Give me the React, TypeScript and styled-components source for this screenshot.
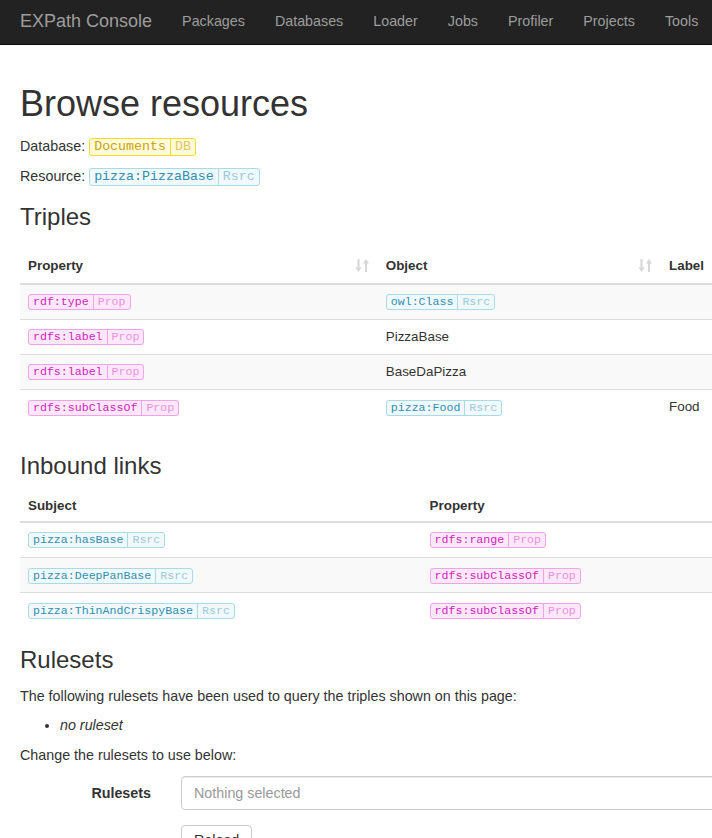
import React from "react";
import styled, { createGlobalStyle } from "styled-components";

const Global = createGlobalStyle`
  html, body { margin: 0; padding: 0; background: #fff; overflow-x: hidden; }
  body { font-family: "Liberation Sans", Arial, sans-serif; font-size: 14.3px; line-height: 20px; color: #333; }
  * { box-sizing: border-box; }
`;

const Navbar = styled.nav`
  height: 45px;
  background: #222;
  border-bottom: 1px solid #080808;
  display: flex;
  align-items: center;
  padding: 0 0 2px 20px;
  white-space: nowrap;
`;
const Brand = styled.a`
  font-size: 18px;
  color: #9d9d9d;
  margin-right: 15px;
`;
const NavLink = styled.a`
  font-size: 14.3px;
  color: #9d9d9d;
  padding: 0 15px;
`;

const Container = styled.div`
  width: 820px;
  padding: 0 20px;
`;

const H1 = styled.h1`
  font-size: 36px;
  font-weight: 500;
  line-height: 1.1;
  margin: 39px 0 12px;
`;
const H3 = styled.h3`
  font-size: 24px;
  font-weight: 500;
  line-height: 1.1;
  margin: 18px 0 12px;
`;
const P = styled.p<{ $mb?: number }>`
  margin: 0 0 ${(p) => p.$mb ?? 10}px;
`;

type Kind = "db" | "rsrc" | "prop";
const palette: Record<Kind, { fg: string; light: string; bg: string; border: string }> = {
  db: { fg: "#c8a400", light: "#e0c860", bg: "#fffbdc", border: "#f5dc20" },
  rsrc: { fg: "#2f8fb0", light: "#9ccad8", bg: "#f1f9fc", border: "#a6dbe8" },
  prop: { fg: "#d21cc0", light: "#ea90e0", bg: "#fde8f9", border: "#f2a2ea" },
};

const Tag = styled.span<{ $kind: Kind; $size: number }>`
  display: inline-flex;
  align-items: stretch;
  font-family: "Liberation Mono", "Courier New", monospace;
  font-size: ${(p) => p.$size}px;
  line-height: 1.2;
  border: 1px solid ${(p) => palette[p.$kind].border};
  background: ${(p) => palette[p.$kind].bg};
  border-radius: 3px;
  vertical-align: middle;
`;
const TagMain = styled.span<{ $kind: Kind }>`
  color: ${(p) => palette[p.$kind].fg};
  padding: 0 4px;
`;
const TagType = styled.span<{ $kind: Kind }>`
  color: ${(p) => palette[p.$kind].light};
  padding: 0 4px;
  border-left: 1px solid ${(p) => palette[p.$kind].border};
`;

function Pill({ kind, name, type, size = 11.6 }: { kind: Kind; name: string; type: string; size?: number }) {
  return (
    <Tag $kind={kind} $size={size}>
      <TagMain $kind={kind}>{name}</TagMain>
      <TagType $kind={kind}>{type}</TagType>
    </Tag>
  );
}

const Table = styled.table<{ $mb: number; $rowH: number }>`
  border-collapse: collapse;
  font-size: 13.4px;
  line-height: 1.428571;
  margin-bottom: ${(p) => p.$mb}px;
  td { height: ${(p) => p.$rowH}px; }
`;
const Th = styled.th<{ $w?: number; $pt: number; $pb: number }>`
  text-align: left;
  font-weight: bold;
  padding: ${(p) => p.$pt}px 8px ${(p) => p.$pb}px;
  border-bottom: 2px solid #ddd;
  width: ${(p) => (p.$w ? `${p.$w}px` : "auto")};
`;
const ThInner = styled.div`
  display: flex;
  justify-content: space-between;
  align-items: center;
`;
const Tr = styled.tr<{ $striped?: boolean }>`
  background: ${(p) => (p.$striped ? "#f9f9f9" : "#fff")};
`;
const Td = styled.td`
  padding: 7px 8px 8px;
  border-top: 1px solid #ddd;
  vertical-align: middle;
`;

function SortIcon() {
  return (
    <svg width="15" height="15" viewBox="0 0 15 15" fill="#d6d6d6">
      <rect x="2.5" y="1" width="2" height="10" />
      <path d="M0.5 9.5 L6.5 9.5 L3.5 14 Z" />
      <rect x="10" y="4" width="2" height="10" />
      <path d="M8 5.5 L14 5.5 L11 1 Z" />
    </svg>
  );
}

const List = styled.ul`
  margin: 0 0 10px;
  padding-left: 40px;
  font-style: italic;
`;

const FormRow = styled.div`
  display: flex;
  align-items: center;
  margin-top: 11px;
`;
const Label = styled.label`
  width: 161px;
  text-align: right;
  padding-right: 30px;
  font-weight: bold;
`;
const Select = styled.div`
  flex: 1;
  height: 34px;
  border: 1px solid #ccc;
  border-radius: 4px;
  padding: 6px 12px;
  color: #999;
  box-shadow: inset 0 1px 1px rgba(0,0,0,0.075);
`;
const ButtonRow = styled.div`
  padding-left: 161px;
  margin-top: 15px;
`;
const Button = styled.button`
  font-family: inherit;
  font-size: 14.3px;
  padding: 6px 12px;
  border: 1px solid #ccc;
  border-radius: 4px;
  background: #fff;
  color: #333;
`;

export default function App() {
  return (
    <>
      <Global />
      <Navbar>
        <Brand>EXPath Console</Brand>
        {["Packages", "Databases", "Loader", "Jobs", "Profiler", "Projects", "Tools"].map((n) => (
          <NavLink key={n}>{n}</NavLink>
        ))}
      </Navbar>
      <Container>
        <H1>Browse resources</H1>
        <P>
          Database: <Pill kind="db" name="Documents" type="DB" size={13.3} />
        </P>
        <P>
          Resource: <Pill kind="rsrc" name="pizza:PizzaBase" type="Rsrc" size={13.3} />
        </P>
        <H3>Triples</H3>
        <Table $mb={29} $rowH={35}>
          <thead>
            <tr>
              <Th $w={360} $pt={14} $pb={7}>
                <ThInner>
                  Property <SortIcon />
                </ThInner>
              </Th>
              <Th $w={285} $pt={14} $pb={7}>
                <ThInner>
                  Object <SortIcon />
                </ThInner>
              </Th>
              <Th $w={140} $pt={14} $pb={7}>Label</Th>
            </tr>
          </thead>
          <tbody>
            <Tr $striped>
              <Td><Pill kind="prop" name="rdf:type" type="Prop" /></Td>
              <Td><Pill kind="rsrc" name="owl:Class" type="Rsrc" /></Td>
              <Td></Td>
            </Tr>
            <Tr>
              <Td><Pill kind="prop" name="rdfs:label" type="Prop" /></Td>
              <Td>PizzaBase</Td>
              <Td></Td>
            </Tr>
            <Tr $striped>
              <Td><Pill kind="prop" name="rdfs:label" type="Prop" /></Td>
              <Td>BaseDaPizza</Td>
              <Td></Td>
            </Tr>
            <Tr>
              <Td><Pill kind="prop" name="rdfs:subClassOf" type="Prop" /></Td>
              <Td><Pill kind="rsrc" name="pizza:Food" type="Rsrc" /></Td>
              <Td>Food</Td>
            </Tr>
          </tbody>
        </Table>
        <H3>Inbound links</H3>
        <Table $mb={20} $rowH={34}>
          <thead>
            <tr>
              <Th $w={403} $pt={4} $pb={6}>Subject</Th>
              <Th $w={380} $pt={4} $pb={6}>Property</Th>
            </tr>
          </thead>
          <tbody>
            <Tr>
              <Td><Pill kind="rsrc" name="pizza:hasBase" type="Rsrc" /></Td>
              <Td><Pill kind="prop" name="rdfs:range" type="Prop" /></Td>
            </Tr>
            <Tr $striped>
              <Td><Pill kind="rsrc" name="pizza:DeepPanBase" type="Rsrc" /></Td>
              <Td><Pill kind="prop" name="rdfs:subClassOf" type="Prop" /></Td>
            </Tr>
            <Tr>
              <Td><Pill kind="rsrc" name="pizza:ThinAndCrispyBase" type="Rsrc" /></Td>
              <Td><Pill kind="prop" name="rdfs:subClassOf" type="Prop" /></Td>
            </Tr>
          </tbody>
        </Table>
        <H3>Rulesets</H3>
        <P $mb={9}>The following rulesets have been used to query the triples shown on this page:</P>
        <List>
          <li>no ruleset</li>
        </List>
        <P>Change the rulesets to use below:</P>
        <FormRow>
          <Label>Rulesets</Label>
          <Select>Nothing selected</Select>
        </FormRow>
        <ButtonRow>
          <Button>Reload</Button>
        </ButtonRow>
      </Container>
    </>
  );
}
